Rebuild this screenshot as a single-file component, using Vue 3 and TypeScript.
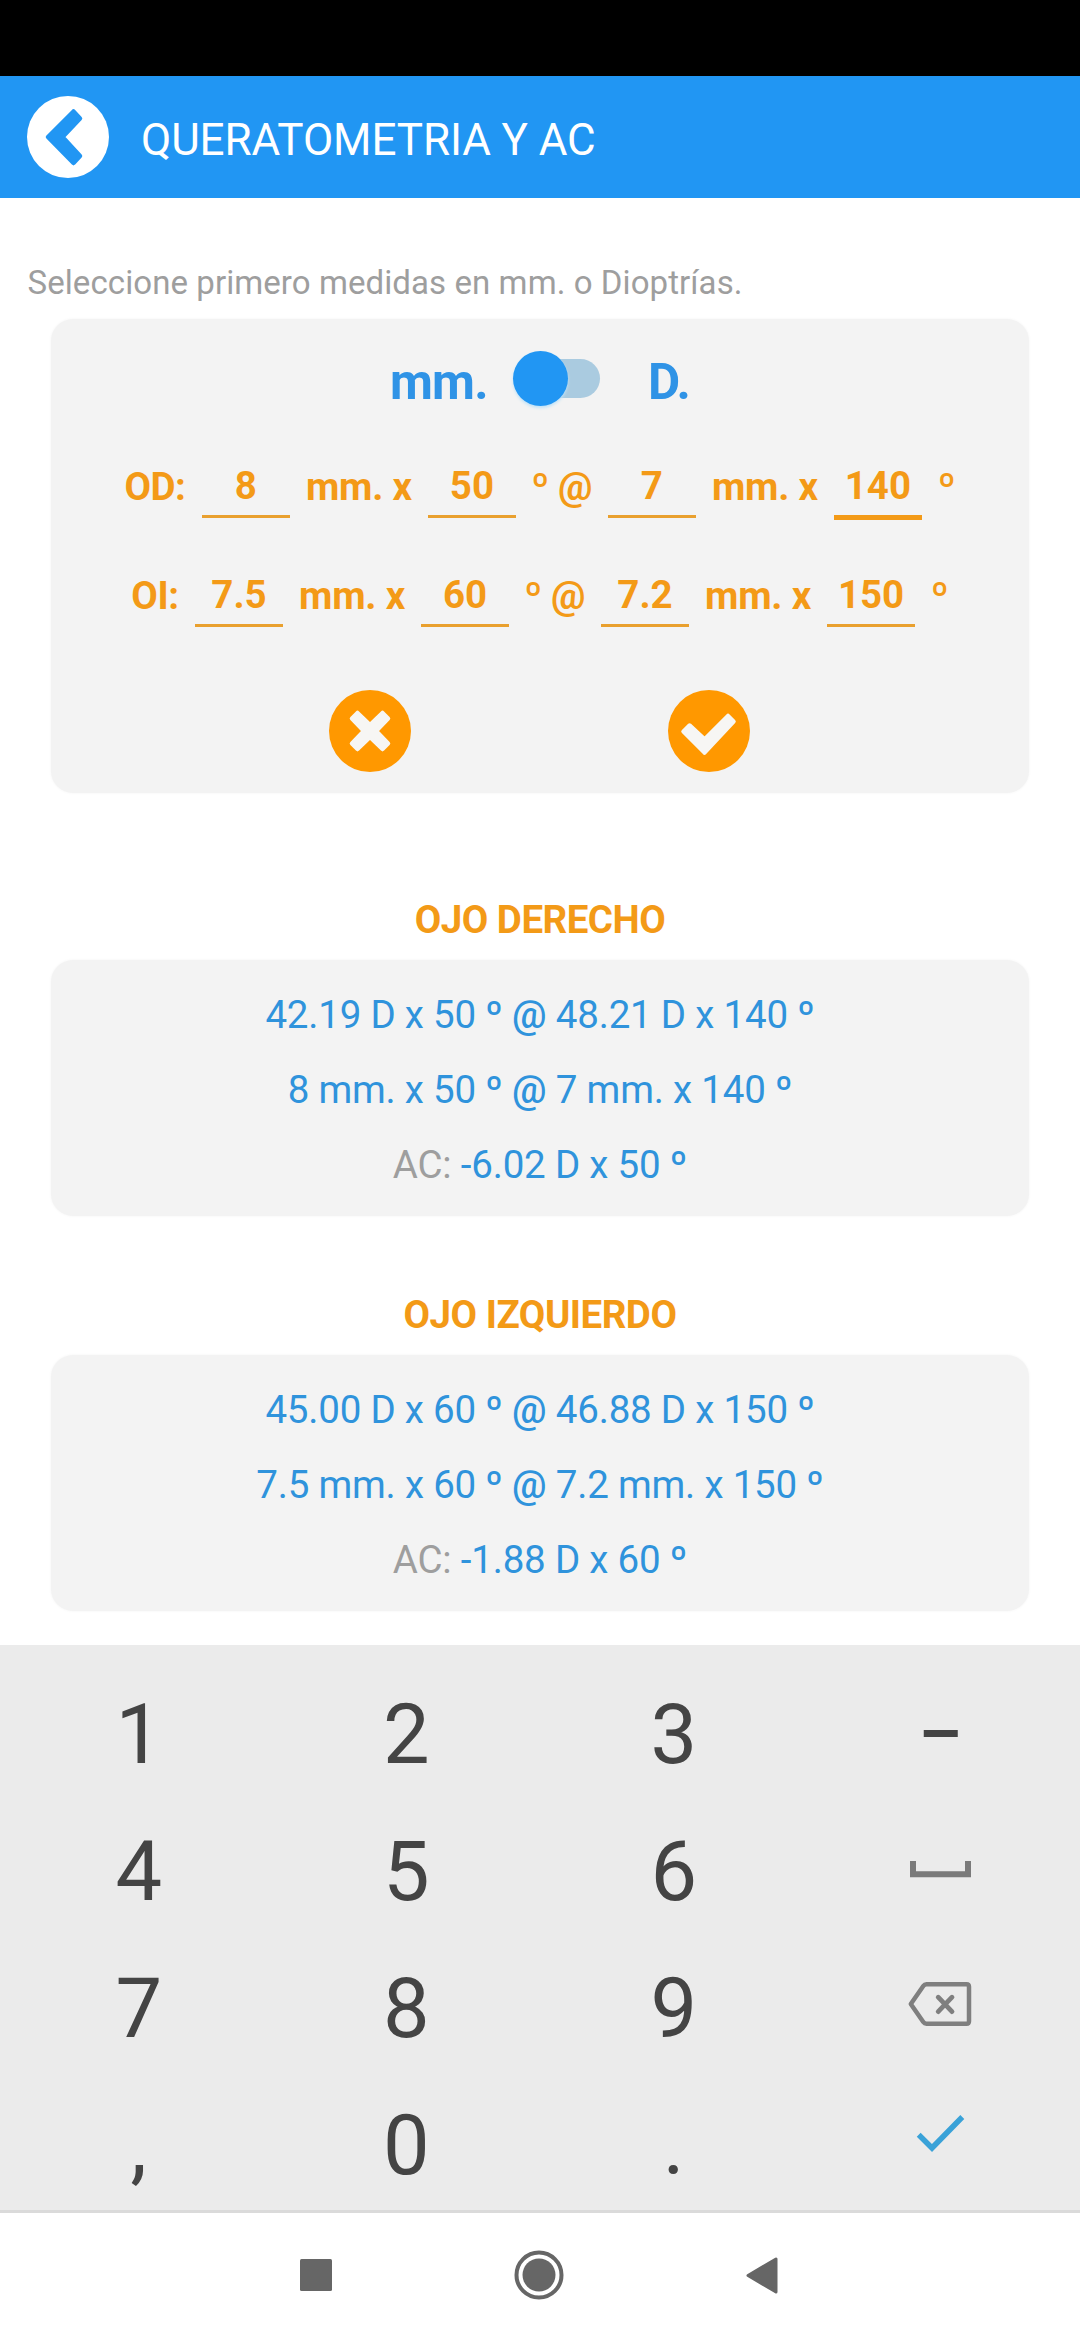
<script setup lang="ts">
interface EyeInput {
  label: string
  r1: string
  axis1: string
  r2: string
  axis2: string
  focused?: boolean
}
interface EyeResult {
  title: string
  measures: [string, string][]
  ac: string
}

const inputs: EyeInput[] = [
  { label: 'OD:', r1: '8', axis1: '50', r2: '7', axis2: '140', focused: true },
  { label: 'OI:', r1: '7.5', axis1: '60', r2: '7.2', axis2: '150' },
]

const results: EyeResult[] = [
  {
    title: 'OJO DERECHO',
    measures: [
      ['42.19 D x 50', '48.21 D x 140'],
      ['8 mm. x 50', '7 mm. x 140'],
    ],
    ac: '-6.02 D x 50',
  },
  {
    title: 'OJO IZQUIERDO',
    measures: [
      ['45.00 D x 60', '46.88 D x 150'],
      ['7.5 mm. x 60', '7.2 mm. x 150'],
    ],
    ac: '-1.88 D x 60',
  },
]

const keys: string[] = [
  '1', '2', '3', 'minus',
  '4', '5', '6', 'space',
  '7', '8', '9', 'backspace',
  ',', '0', '.', 'done',
]
</script>

<template>
  <div class="screen">
    <div class="status"></div>
    <header class="bar">
      <svg class="back" width="82" height="82" viewBox="0 0 82 82">
        <circle cx="41" cy="41" r="41" fill="#fff" />
        <path d="M46.5 15.5 L21 41 L46.5 67 L53 60 L35.5 41 L53 22.500 Z" fill="#2196f3" stroke="#2196f3" stroke-width="4.500" stroke-linejoin="round" />
      </svg>
      <h1>QUERATOMETRIA Y AC</h1>
    </header>

    <main>
      <p class="hint">Seleccione primero medidas en mm. o Dioptrías.</p>

      <section class="card form">
        <div class="units">
          <span class="unit-mm">mm.</span>
          <span class="switch"><i class="thumb"></i></span>
          <span class="unit-d">D.</span>
        </div>
        <div v-for="eye in inputs" :key="eye.label" class="measure">
          <span class="label">{{ eye.label }}</span>
          <span class="field">{{ eye.r1 }}</span>
          <span class="by">mm. x</span>
          <span class="field">{{ eye.axis1 }}</span>
          <span class="at">º @</span>
          <span class="field">{{ eye.r2 }}</span>
          <span class="by">mm. x</span>
          <span class="field" :class="{ focused: eye.focused }">{{ eye.axis2 }}</span>
          <span class="deg">º</span>
        </div>
        <div class="actions">
          <svg width="82" height="82" viewBox="0 0 82 82">
            <circle cx="41" cy="41" r="41" fill="#ff9800" />
            <path d="M28.500 23 L41 35 L53.500 23 L59 28.500 L47 41 L59 53.500 L53.500 59 L41 47 L28.500 59 L23 53.500 L35 41 L23 28.500 Z" fill="#f7f6f4" stroke="#f7f6f4" stroke-width="4.500" stroke-linejoin="round" />
          </svg>
          <svg width="82" height="82" viewBox="0 0 82 82">
            <circle cx="41" cy="41" r="41" fill="#ff9800" />
            <path d="M21.500 35.500 L36.500 49.500 L60 26 L65.500 31.500 L36.500 62.500 L15.500 41.500 Z" fill="#f7f6f4" stroke="#f7f6f4" stroke-width="4.500" stroke-linejoin="round" />
          </svg>
        </div>
      </section>

      <section v-for="eye in results" :key="eye.title" class="result">
        <h2>{{ eye.title }}</h2>
        <div class="card lines">
          <p v-for="m in eye.measures" :key="m[0]">{{ m[0] }} <b>º @</b> {{ m[1] }} <b>º</b></p>
          <p><span class="ac">AC:</span> {{ eye.ac }} <b>º</b></p>
        </div>
      </section>
    </main>

    <div class="keyboard">
      <div v-for="key in keys" :key="key" class="key">
        <svg v-if="key === 'minus'" width="80" height="137" viewBox="0 0 80 137">
          <rect x="22.750" y="64" width="34" height="7" fill="#444" />
        </svg>
        <svg v-else-if="key === 'space'" width="80" height="137" viewBox="0 0 80 137">
          <path d="M12 58 V71.200 H67 V58" fill="none" stroke="#7a7a7a" stroke-width="6" />
        </svg>
        <svg v-else-if="key === 'backspace'" width="80" height="137" viewBox="0 0 80 137" fill="none" stroke="#7f7f7f" stroke-linejoin="round" stroke-linecap="round">
          <path d="M25.500 44.300 H65.500 Q68 44.300 68 46.800 V81.200 Q68 83.700 65.500 83.700 H25.500 Q23.500 83.700 22.300 82 L9.800 64 L22.300 46 Q23.500 44.300 25.500 44.300 Z" stroke-width="4.500" />
          <path d="M37.200 57.200 L51 71.600 M51 57.200 L37.200 71.600" stroke-width="4.800" />
        </svg>
        <svg v-else-if="key === 'done'" width="80" height="137" viewBox="0 0 80 137">
          <path d="M17.700 57.800 L31 71 L61.300 40" fill="none" stroke="#3aa2d8" stroke-width="5.500" />
        </svg>
        <template v-else>{{ key }}</template>
      </div>
    </div>

    <nav class="nav">
      <svg width="32" height="32" viewBox="0 0 32 32"><rect width="32" height="32" rx="1.500" fill="#666" /></svg>
      <svg width="50" height="50" viewBox="0 0 50 50">
        <circle cx="25" cy="25" r="22.500" fill="none" stroke="#666" stroke-width="4" />
        <circle cx="25" cy="25" r="16.500" fill="#666" />
      </svg>
      <svg width="32" height="37" viewBox="0 0 32 37"><path d="M2 18.500 L30 2 V35 Z" fill="#666" stroke="#666" stroke-width="3" stroke-linejoin="round" /></svg>
    </nav>
  </div>
</template>

<style>
body {
  margin: 0;
  background: #fff;
}
</style>

<style scoped>
.screen {
  width: 1080px;
  height: 2340px;
  display: flex;
  flex-direction: column;
  overflow: hidden;
  background: #fff;
  font-family: Roboto, "Liberation Sans", sans-serif;
}
.screen * {
  box-sizing: border-box;
}
h1, h2, p {
  margin: 0;
  font-weight: 400;
}
svg {
  display: block;
  flex: none;
}
.status {
  height: 76px;
  background: #000;
  flex: none;
}
.bar {
  height: 122px;
  flex: none;
  display: flex;
  align-items: center;
  padding-left: 27px;
  gap: 32px;
  background: #2196f3;
  color: #fff;
}
.bar h1 {
  font-size: 44px;
  line-height: 52px;
  padding-top: 6px;
  letter-spacing: -0.1px;
}
main {
  height: 1447px;
  flex: none;
}
.hint {
  padding: 65px 0 0 27.5px;
  height: 121px;
  font-size: 33px;
  line-height: 40px;
  letter-spacing: 0.08px;
  color: #9e9e9e;
}
.card {
  margin: 0 51px;
  border-radius: 22px;
  background: #f3f3f3;
  box-shadow: 0 0 3px #f4f4f4;
}
.form {
  height: 474px;
  padding-top: 23px;
  color: #f39a17;
}
.units {
  height: 80px;
  display: flex;
  align-items: center;
  font-size: 49.5px;
  line-height: 58px;
  font-weight: 700;
  letter-spacing: -0.8px;
  color: #2f93e6;
}
.unit-mm {
  width: 126px;
  margin-left: 339px;
}
.switch {
  position: relative;
  width: 84px;
  height: 39px;
  margin-top: -7px;
  border-radius: 20px;
  background: #aacbe0;
}
.thumb {
  position: absolute;
  left: -3px;
  top: -8px;
  width: 55px;
  height: 55px;
  border-radius: 50%;
  background: #2196f3;
  box-shadow: 0 2px 3px #bfe2f8;
}
.unit-d {
  margin-left: 48px;
}
.measure {
  height: 109px;
  display: flex;
  justify-content: center;
  align-items: flex-start;
  padding-top: 42px;
  font-size: 38.5px;
  line-height: 46px;
  font-weight: 700;
}
.label {
  padding-right: 16.5px;
  letter-spacing: -0.5px;
}
.field {
  width: 88px;
  height: 55px;
  margin-top: -1px;
  border-bottom: 3px solid #e9a02e;
  text-align: center;
}
.field.focused {
  height: 57px;
  border-bottom: 5px solid #f39a17;
}
.by {
  width: 138px;
  padding-left: 16px;
  letter-spacing: -0.2px;
}
.at {
  width: 92px;
  padding-left: 15.5px;
  letter-spacing: -0.3px;
}
.deg {
  padding-left: 16px;
}
.actions {
  display: flex;
  gap: 257px;
  padding: 50px 0 0 278px;
}
.result h2 {
  height: 167px;
  padding-top: 104px;
  font-size: 38.5px;
  line-height: 46px;
  font-weight: 700;
  letter-spacing: -0.5px;
  text-align: center;
  color: #f39a17;
}
.result + .result h2 {
  height: 139px;
  padding-top: 76px;
}
.lines {
  height: 256px;
  padding-top: 17px;
  font-size: 38.5px;
  line-height: 75px;
  letter-spacing: -0.2px;
  text-align: center;
  color: #2f93dc;
}
.lines b {
  font-weight: 500;
}
.ac {
  color: #9e9e9e;
}
.keyboard {
  height: 565px;
  flex: none;
  display: grid;
  grid-template-columns: repeat(4, 267.5px);
  grid-auto-rows: 137px;
  padding: 21px 5px 0;
  background: #ebebeb;
  color: #444;
  font-size: 83px;
}
.key {
  display: flex;
  align-items: center;
  justify-content: center;
  line-height: 137px;
}
.nav {
  height: 130px;
  flex: none;
  border-top: 3px solid #dadada;
  display: flex;
  align-items: center;
  padding: 0 0 3px 300px;
  gap: 182px;
  background: #fff;
}
</style>
